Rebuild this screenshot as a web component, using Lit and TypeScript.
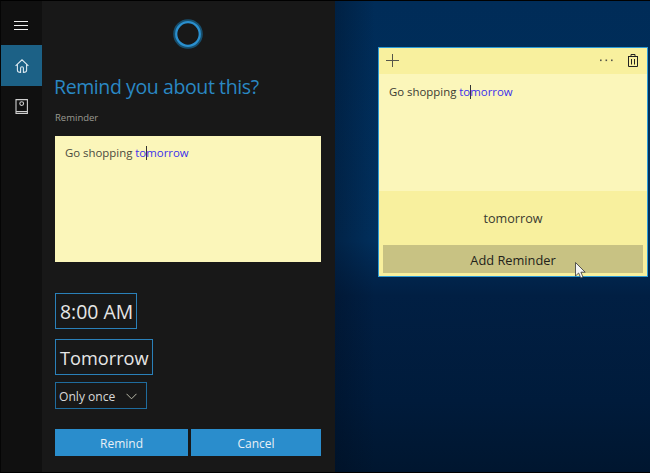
import { LitElement, html, css } from "lit";
import { customElement } from "lit/decorators.js";

const FONT = css`"Open Sans", "Noto Sans", "Liberation Sans", sans-serif`;

@customElement("app-root")
export class AppRoot extends LitElement {
  static styles = css`
    :host { display: block; width: 650px; height: 473px; overflow: hidden; font-family: ${FONT}; }
    .screen { display: flex; width: 650px; height: 473px; box-sizing: border-box; border-bottom: 1px solid #000; }
    .rail { width: 42px; flex: none; background: #101010; display: flex; flex-direction: column; box-sizing: border-box; border-left: 1px solid #050505; border-top: 1px solid #000; }
    .rail-item { height: 41px; display: flex; align-items: center; justify-content: center; flex: none; }
    .rail-item svg { display: block; }
    .rail-top { height: 44px; padding: 4px 1px 0 0; box-sizing: border-box; }
    .rail-item.active { background: #1c6186; }
    .rail-book { height: 40px; padding-right: 1px; box-sizing: border-box; }
    .panel { width: 293px; flex: none; background: #181818; border-top: 1px solid #000; box-sizing: border-box; padding: 0 14px 0 13px; display: flex; flex-direction: column; }
    .orb { height: 72px; display: flex; justify-content: center; align-items: flex-start; padding-top: 18px; box-sizing: border-box; margin-left: -1px; flex: none; }
    .title { margin: 0 0 0 -1px; font-size: 19.5px; font-weight: 400; line-height: 28px; color: #2a88c4; height: 29px; white-space: nowrap; letter-spacing: -0.4px; }
    .label { margin: 9px 0 0 0; font-size: 9.5px; line-height: 14px; color: #9a9a92; height: 14px; }
    .note { margin-top: 11px; height: 126px; background: #fbf6ba; padding: 9px 10px; box-sizing: border-box; font-size: 11.4px; line-height: 15px; color: #4a4a40; flex: none; white-space: nowrap; }
    .link { color: #3a30ec; }
    .caret { display: inline-block; width: 1px; height: 14px; background: #333; vertical-align: -3px; margin: 0 -0.5px; }
    .pick { display: block; align-self: flex-start; border: 1px solid #2a80b9; color: #e6e6e6; box-sizing: border-box; height: 36px; line-height: 36px; padding: 0 3px 0 4px; white-space: nowrap; flex: none; }
    .time { margin-top: 31px; width: 82px; font-size: 19.4px; }
    .day { margin-top: 10px; width: 98px; font-size: 18.2px; }
    .select { margin-top: 7px; width: 92px; height: 27px; border: 1px solid #1f6c9e; display: flex; align-items: center; justify-content: space-between; box-sizing: border-box; padding: 1px 9px 0 3px; color: #d8d8d8; font-size: 12.1px; flex: none; }
    .actions { margin-top: 20px; display: grid; grid-template-columns: 133px 130px; gap: 3px; }
    .btn { height: 27px; box-sizing: border-box; padding-top: 1px; background: #2a8dcc; color: #e8f0f6; font-size: 12px; display: flex; align-items: center; justify-content: center; }
    .desktop { flex: 1; position: relative; box-sizing: border-box; padding: 47px 2px 0 43px; border-top: 1px solid #000;
      background:
        linear-gradient(90deg, rgba(0,12,30,.35) 0, transparent 40px),
        linear-gradient(180deg, #002c58 0, #012f5c 240px, #011f43 295px, #001b3b 400px, #00162f 473px); }
    .sticky { width: 270px; height: 230px; box-sizing: border-box; border: 1px solid #2d9bd6; background: #f8f09e; display: flex; flex-direction: column; margin-top: -1px; }
    .head { height: 26px; display: flex; align-items: center; padding: 0 9px 1px 7px; box-sizing: border-box; flex: none; justify-content: space-between; }
    .head-right { display: flex; align-items: center; gap: 15px; }
    .body { height: 117px; background: #fbf6ba; padding: 10px 10px; box-sizing: border-box; font-size: 11.4px; line-height: 15px; color: #3a3a32; white-space: nowrap; flex: none; }
    .foot { flex: 1; display: flex; flex-direction: column; align-items: stretch; padding: 0 4px 3px; }
    .date { height: 54px; display: flex; align-items: center; justify-content: center; font-size: 12.6px; color: #3a3a30; }
    .add { height: 28px; background: #c8c283; color: #22221a; font-size: 12.8px; padding-top: 1px; box-sizing: border-box; display: flex; align-items: center; justify-content: center; }
    .cursor { position: absolute; left: 240px; top: 261px; }
  `;

  private caretText() {
    return html`<span class="link">to</span><span class="caret"></span><span class="link">morrow</span>`;
  }

  render() {
    return html`
      <div class="screen">
        <nav class="rail">
          <div class="rail-item rail-top">
            <svg width="14" height="9" viewBox="0 0 14 9" fill="none" stroke="#eee" stroke-width="1"><path d="M0 .5H14M0 4.5H14M0 8.5H14"/></svg>
          </div>
          <div class="rail-item active">
            <svg width="14" height="14" viewBox="0 0 14 14" fill="none" stroke="#dce8f0" stroke-width="1.1"><path d="M.6 6.8 7 .8 13.4 6.8M2.4 5.6V11.2C2.4 12.6 3.2 13.4 5.6 13.4V9C5.6 7.4 8.4 7.4 8.4 9V13.4C10.8 13.4 11.6 12.6 11.6 11.2V5.6"/></svg>
          </div>
          <div class="rail-item rail-book">
            <svg width="13" height="15" viewBox="0 0 13 15" fill="none" stroke="#cfcfcf" stroke-width="1.1"><path d="M1 .6H12.4V12.5H1ZM1 12.5V14.4H12.4V12.5"/><circle cx="6.7" cy="4.6" r="1.9"/></svg>
          </div>
        </nav>
        <section class="panel">
          <div class="orb">
            <svg width="30" height="30" viewBox="0 0 30 30" fill="none">
              <circle cx="15" cy="15" r="13.6" stroke="#174f6e" stroke-width="2.4"/>
              <circle cx="15" cy="15" r="11.8" stroke="#2a8fce" stroke-width="2.3"/>
            </svg>
          </div>
          <h1 class="title">Remind you about this?</h1>
          <div class="label">Reminder</div>
          <div class="note">Go shopping ${this.caretText()}</div>
          <div class="pick time">8:00 AM</div>
          <div class="pick day">Tomorrow</div>
          <div class="select"><span>Only once</span>
            <svg width="11" height="7" viewBox="0 0 11 7" fill="none" stroke="#b8b8a8" stroke-width="1"><path d="M.5 .8 5.5 5.8 10.5 .8"/></svg>
          </div>
          <div class="actions"><div class="btn">Remind</div><div class="btn">Cancel</div></div>
        </section>
        <section class="desktop">
          <div class="sticky">
            <div class="head">
              <svg width="13" height="13" viewBox="0 0 13 13" fill="none" stroke="#55554a" stroke-width="1"><path d="M6.5 0V13M0 6.5H13"/></svg>
              <div class="head-right">
                <svg width="13" height="3" viewBox="0 0 13 3" fill="#55554a"><rect x="0" y="0.5" width="1.6" height="1.6"/><rect x="5.5" y="0.5" width="1.6" height="1.6"/><rect x="11" y="0.5" width="1.6" height="1.6"/></svg>
                <svg width="10" height="13" viewBox="0 0 10 13" fill="none" stroke="#222" stroke-width="1"><path d="M0 2.5H10M.5 2.5V12.5H9.5V2.5M3 2.5V.5H7V2.5M3.5 5V10.5M6.5 5V10.5"/></svg>
              </div>
            </div>
            <div class="body">Go shopping ${this.caretText()}</div>
            <div class="foot">
              <div class="date">tomorrow</div>
              <div class="add">Add Reminder</div>
            </div>
          </div>
          <svg class="cursor" width="11" height="17" viewBox="0 0 11 17"><path d="M.5 .5V14L3.6 11 5.8 16 8 15 5.9 10.2H10.2Z" fill="#f4f4f4" stroke="#333" stroke-width=".8"/></svg>
        </section>
      </div>
    `;
  }
}
